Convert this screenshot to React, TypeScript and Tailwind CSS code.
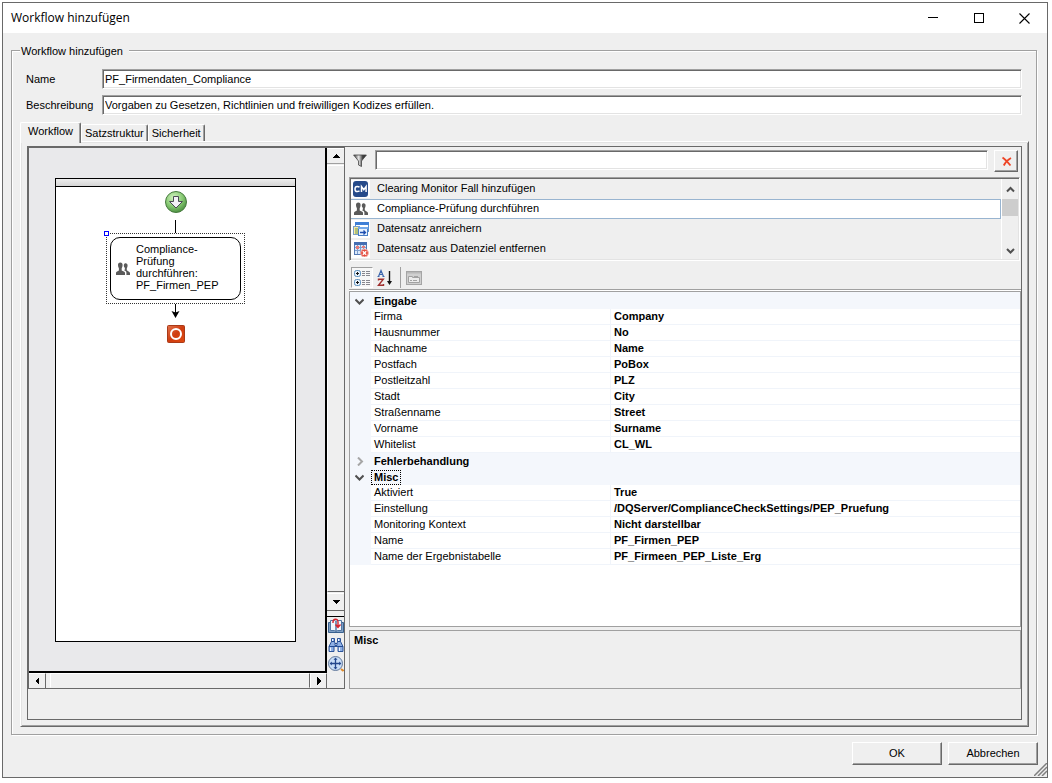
import React, { useState } from 'react';

const sunken = 'border border-t-[#a0a0a0] border-l-[#a0a0a0] border-r-white border-b-white shadow-[inset_1px_1px_0_#696969,inset_-1px_-1px_0_#e3e3e3]';
const raised = 'border border-t-white border-l-white border-r-[#696969] border-b-[#696969] shadow-[inset_-1px_-1px_0_#a0a0a0]';

const tabs = ['Workflow', 'Satzstruktur', 'Sicherheit'];

const groups = [
  {
    name: 'Eingabe',
    open: true,
    rows: [
      ['Firma', 'Company'],
      ['Hausnummer', 'No'],
      ['Nachname', 'Name'],
      ['Postfach', 'PoBox'],
      ['Postleitzahl', 'PLZ'],
      ['Stadt', 'City'],
      ['Straßenname', 'Street'],
      ['Vorname', 'Surname'],
      ['Whitelist', 'CL_WL'],
    ],
  },
  { name: 'Fehlerbehandlung', open: false, rows: [] },
  {
    name: 'Misc',
    open: true,
    rows: [
      ['Aktiviert', 'True'],
      ['Einstellung', '/DQServer/ComplianceCheckSettings/PEP_Pruefung'],
      ['Monitoring Kontext', 'Nicht darstellbar'],
      ['Name', 'PF_Firmen_PEP'],
      ['Name der Ergebnistabelle', 'PF_Firmeen_PEP_Liste_Erg'],
    ],
  },
];

/* Icons */

const PeopleIcon = () => (
  <svg width="16" height="16" viewBox="0 0 16 16" fill="#5a5a5a">
    <path d="M3 4C3 2.200 3.700 1.400 5.300 1.400S7.600 2.200 7.600 4c0 1.400-.3 2.400-.9 3.200v2.300l2.600 1.300c.5.300.7.700.7 1.300V14H1v-1.900c0-.6.2-1 .7-1.300l2.200-1.300V7.200C3.300 6.400 3 5.400 3 4z" />
    <path d="M8.800 4c.3-1.200.9-1.700 1.800-1.700 1.400 0 2 .9 2 2.300 0 1.200-.3 2-.8 2.700v2l2.500 1.600c.5.300.7.700.7 1.300V14h-3.600v-2.200c0-.8-.3-1.300-.9-1.700l-1.200-.7c.5-.8.7-1.500.6-2.500-.8-.7-1.200-1.700-1.100-2.900z" />
  </svg>
);

const CmIcon = () => (
  <svg width="16" height="16" viewBox="0 0 16 16">
    <rect x="0" y="0" width="15" height="16" rx="3" fill="#274b8a" />
    <path d="M6.500 6.200C5.800 5.500 4.900 5.400 4.100 5.400 2.800 5.400 2 6.500 2 8s.8 2.600 2.100 2.600c.8 0 1.700-.2 2.400-.9M8.500 11V5.500l2.300 3.200 2.300-3.200V11" fill="none" stroke="#fff" strokeWidth="1.500" />
  </svg>
);

const EnrichIcon = () => (
  <svg width="16" height="16" viewBox="0 0 16 16">
    <rect x="2.500" y="1.500" width="13" height="9" fill="#fff" stroke="#5b8fd0" />
    <path d="M2 1h14v3H2z" fill="#3f7fd6" />
    <rect x=".5" y="5.500" width="6" height="8" fill="#f7e7a0" stroke="#7aa0c8" />
    <path d="M2 8h3M2 10h3M2 12h3" stroke="#6b9b4e" />
    <rect x="5.500" y="6.500" width="9" height="8" fill="#e9f3ff" stroke="#4a7fc4" />
    <path d="M5 6h10v2H5z" fill="#74a9ea" />
    <path d="M7 11.500h5M10.500 9.500l2 2-2 2" fill="none" stroke="#1e4fb0" strokeWidth="1.300" />
  </svg>
);

const RemoveIcon = () => (
  <svg width="16" height="16" viewBox="0 0 16 16">
    <rect x="1.500" y="1.500" width="12" height="12" fill="#dce9fa" stroke="#5479b4" />
    <path d="M1 1h13v3H1z" fill="#466fb2" />
    <path d="M4.500 4v9M7.500 4v9M10.500 4v9M2 6.500h11M2 9.500h11" stroke="#7e9fce" />
    <path d="M3 5h3v3H3zM9 5h3v2H9z" fill="#e77a77" />
    <circle cx="11.500" cy="12" r="3.900" fill="#e3493b" stroke="#f5b5ad" />
    <path d="M9.800 10.300l3.400 3.400M13.200 10.300l-3.400 3.400" stroke="#fff" strokeWidth="1.400" />
  </svg>
);

const FilterIcon = () => (
  <svg width="14" height="14" viewBox="0 0 14 14">
    <defs>
      <linearGradient id="funnel" x1="0" x2="1">
        <stop offset="0" stopColor="#333" />
        <stop offset=".4" stopColor="#e8e8e8" />
        <stop offset=".7" stopColor="#444" />
        <stop offset="1" stopColor="#222" />
      </linearGradient>
    </defs>
    <path d="M.6 1h12.800L8.500 7v5.500l-3-1.500V7z" fill="url(#funnel)" stroke="#444" strokeWidth=".8" />
  </svg>
);

const CategorizedIcon = () => (
  <svg width="18" height="18" viewBox="0 0 18 18">
    {[1, 10].map(y => (
      <g key={y}>
        <rect x="1.500" y={y + 0.5} width="6" height="6" rx="2" fill="#e5f0fa" stroke="#5c8fbd" />
        <path d={`M3 ${y + 3.5}h3M4.500 ${y + 2}v3`} stroke="#111" />
        <path d={`M9 ${y + 1.5}h3M13 ${y + 1.5}h4M9 ${y + 3.5}h3M13 ${y + 3.5}h4M9 ${y + 5.5}h3M13 ${y + 5.5}h4`} stroke="#87878f" />
      </g>
    ))}
  </svg>
);

const SortIcon = () => (
  <svg width="18" height="18" viewBox="0 0 18 18">
    <path d="M1.500 7.500L4 1.500l2.500 6M2.500 5.500h3M.5 7.500h2M5.500 7.500h2" fill="none" stroke="#3b66ad" strokeWidth="1.200" />
    <path d="M1.500 11.500v-1.200h4.800L1.500 16.300h5V15" fill="none" stroke="#a0302f" strokeWidth="1.400" />
    <path d="M12.500 2v12" stroke="#111" strokeWidth="1.400" />
    <path d="M10 12h5l-2.500 4z" fill="#111" />
  </svg>
);

const PagesIcon = () => (
  <svg width="16" height="16" viewBox="0 0 16 16">
    <rect x=".5" y="1.500" width="15" height="13" fill="#d0d0d0" stroke="#a5a5a5" />
    <path d="M1 2h14v1.500H1z" fill="#b8b8b8" />
    <path d="M2.500 12.500v-6h4v1h7v5z" fill="#ececec" stroke="#a2a2a2" />
    <path d="M4 10.500h2M7 10.500h4M8 6.500h4" stroke="#a2a2a2" />
  </svg>
);

const RedXIcon = () => (
  <svg width="10" height="11" viewBox="0 0 10 11">
    <path d="M.5 1.500c3 2 5.500 5 8 8M9 2C6 3.500 3.500 6 1.800 9.500" fill="none" stroke="#ee4425" strokeWidth="1.800" />
  </svg>
);

const StartIcon = () => (
  <svg width="22" height="22" viewBox="0 0 22 22">
    <defs>
      <radialGradient id="start" cx=".4" cy=".3" r=".7">
        <stop offset="0" stopColor="#d5f5c4" />
        <stop offset=".6" stopColor="#86c872" />
        <stop offset="1" stopColor="#4f9343" />
      </radialGradient>
    </defs>
    <circle cx="11" cy="11" r="10.500" fill="url(#start)" stroke="#467a3e" />
    <path d="M8.500 5.500h5v5h4L11 17l-6.500-6.500h4z" fill="#f4f2f8" stroke="#4b4b55" />
  </svg>
);

const EndIcon = () => (
  <svg width="18" height="18" viewBox="0 0 18 18">
    <defs>
      <linearGradient id="end" x2="1" y2="1">
        <stop offset="0" stopColor="#e2744e" />
        <stop offset=".5" stopColor="#cf3d10" />
        <stop offset="1" stopColor="#e04a10" />
      </linearGradient>
    </defs>
    <rect x=".5" y=".5" width="17" height="17" rx="1" fill="url(#end)" stroke="#a93a18" />
    <circle cx="9" cy="9" r="5" fill="none" stroke="#fff" strokeWidth="2" />
  </svg>
);

const BookIcon = () => (
  <svg width="16" height="16" viewBox="0 0 16 16">
    <path d="M.5 4.500v10h15v-10z" fill="#7f9fc4" stroke="#38608f" />
    <path d="M2.500 2.500h4l1.500 1v10l-1.500-1h-4zM13.500 2.500h-4L8 3.500v10l1.500-1h4z" fill="#f3f7fc" stroke="#5377a3" />
    <path d="M5 5V4c0-3.500 5-4 5 0v4.500M7.500 6.500L10 9.500l2.500-3" fill="none" stroke="#d8242f" strokeWidth="1.400" />
  </svg>
);

const BinocularsIcon = () => (
  <svg width="16" height="16" viewBox="0 0 16 16">
    <path d="M3.500 1.500h3v3l.5 2v2H9v-2l.5-2v-3h3v3l2.500 5v5h-5v-5H6v5H1v-5l2.500-5z" fill="#8fb0e4" stroke="#2d559b" />
    <path d="M1 9.500h5M10 9.500h5M3.500 4.500h3M9.500 4.500h3M7 6.500h2" stroke="#234a91" />
    <path d="M2.500 10.500v3.500M11.500 10.500v3.500M4.500 2v2M10.500 2v2" stroke="#f1f7ff" />
  </svg>
);

const PanIcon = () => (
  <svg width="16" height="16" viewBox="0 0 16 16">
    <circle cx="7.500" cy="7.500" r="7" fill="#c9def8" stroke="#63799b" />
    <path d="M7.500 3v9M3 7.500h9" stroke="#24478c" strokeWidth="1.300" />
    <path d="M7.500 1.500l2 2.300h-4zM7.500 13.500l2-2.300h-4zM1.500 7.500l2.300-2v4zM13.500 7.500l-2.300-2v4z" fill="#24478c" />
    <path d="M13 13l2.500 2" stroke="#e08a2a" strokeWidth="2" />
  </svg>
);

const Chevron = ({ d, color = '#505050' }: { d: string; color?: string }) => (
  <svg width="9" height="9" viewBox="0 0 9 9" fill="none" stroke={color} strokeWidth="2">
    <path d={d} />
  </svg>
);

const Triangle = ({ points }: { points: string }) => (
  <svg width="8" height="8" viewBox="0 0 8 8" shapeRendering="crispEdges">
    <polygon points={points} />
  </svg>
);

const activities = [
  { label: 'Clearing Monitor Fall hinzufügen', icon: <CmIcon /> },
  { label: 'Compliance-Prüfung durchführen', icon: <PeopleIcon /> },
  { label: 'Datensatz anreichern', icon: <EnrichIcon /> },
  { label: 'Datensatz aus Datenziel entfernen', icon: <RemoveIcon /> },
];

const TitleBar = () => (
  <header className="flex h-[30px] items-center bg-white pl-2">
    <h1 className="flex-1 font-['Open_Sans',sans-serif] text-[12px] leading-4">Workflow hinzufügen</h1>
    <button aria-label="Minimieren" className="flex h-full w-[46px] items-center justify-center">
      <svg width="10" height="10" stroke="#000" shapeRendering="crispEdges"><path d="M0 4.500h10" /></svg>
    </button>
    <button aria-label="Maximieren" className="flex h-full w-[45px] items-center justify-center">
      <svg width="10" height="10" fill="none" stroke="#000" shapeRendering="crispEdges"><rect x=".5" y=".5" width="9" height="9" /></svg>
    </button>
    <button aria-label="Schließen" className="flex h-full w-[46px] items-center justify-center">
      <svg width="11" height="11" stroke="#000" strokeWidth="1.100"><path d="M.5 .5l10 10M10.500 .5l-10 10" /></svg>
    </button>
  </header>
);

const Designer = () => (
  <div className="flex w-[317px] shrink-0 border border-[#696969]">
    <div className="flex min-w-0 flex-1 flex-col">
      {/* Canvas */}
      <div className="flex flex-1 flex-col border-r-2 border-b-2 border-black bg-[#e9e9eb] pt-[30px] pr-[29px] pb-[29px] pl-[26px]">
        <div className="flex flex-1 flex-col items-center border border-black bg-white">
          <div className="h-2 w-full border-b border-black bg-linear-to-b from-[#eeeeee] to-[#d5d5d5]" />
          <div className="mt-1"><StartIcon /></div>
          <div className="mt-[7px] h-[13px] w-px bg-black" />
          <div className="relative border border-dotted border-[#333] p-[3px]">
            <span className="absolute -top-[3px] -left-[3px] h-[5px] w-[5px] border border-[#0000ff] bg-white" />
            <div className="flex h-[63px] w-[131px] items-center gap-[5px] rounded-[10px] border border-black pl-1">
              <div className="shrink-0"><PeopleIcon /></div>
              <p className="pb-1 text-[11px] leading-[12px]">Compliance-<br />Prüfung<br />durchführen:<br />PF_Firmen_PEP</p>
            </div>
          </div>
          <svg width="9" height="14" viewBox="0 0 9 14"><path d="M4.500 0v10" stroke="#000" /><path d="M.5 7l4 1.500 4-1.500-4 7z" /></svg>
          <div className="mt-[7px]"><EndIcon /></div>
        </div>
      </div>
      {/* Horizontal scrollbar */}
      <div className="flex h-[15px]">
        <button aria-label="Nach links" className="flex w-[17px] items-center justify-center border-t border-r border-t-white border-r-[#696969]"><Triangle points="6,0 6,8 2,4" /></button>
        <div className="ml-1 flex-1 border border-t-white border-r-[#696969] border-b-transparent border-l-white" />
        <button aria-label="Nach rechts" className="flex w-[17px] items-center justify-center border-t border-r border-l border-t-white border-r-[#696969] border-l-white"><Triangle points="2,0 2,8 6,4" /></button>
      </div>
    </div>
    {/* Vertical scrollbar and view tools */}
    <div className="flex w-[17px] flex-col">
      <button aria-label="Nach oben" className="flex h-4 items-center justify-center border-t border-b border-t-white border-b-[#a0a0a0]"><Triangle points="4,2 8,6 0,6" /></button>
      <div className="mt-px flex-1 border-t border-b border-l border-t-white border-b-[#696969] border-l-white" />
      <button aria-label="Nach unten" className="mt-px flex h-[18px] items-center justify-center border-t border-b border-t-white border-b-[#696969]"><Triangle points="0,2 8,2 4,6" /></button>
      <div className="mt-[5px] flex flex-col items-end gap-[3px] border-t border-black pt-px pb-[16px]">
        <button aria-label="Seite"><BookIcon /></button>
        <button aria-label="Suchen"><BinocularsIcon /></button>
        <button aria-label="Verschieben"><PanIcon /></button>
      </div>
    </div>
  </div>
);

const ActivityList = () => {
  const [selected, setSelected] = useState(1);
  return (
    <div className={`mr-px flex p-px ${sunken}`}>
      <ul role="listbox" aria-label="Aktivitäten" className="min-w-0 flex-1">
        {activities.map((a, i) => (
          <li
            key={a.label}
            role="option"
            aria-selected={i === selected}
            onClick={() => setSelected(i)}
            className={`flex h-5 items-center border-y border-r ${i === selected ? 'border-[#98b4d0] bg-white' : 'border-transparent'}`}
          >
            <span className="flex h-full w-[19px] shrink-0 items-center justify-center bg-white">{a.icon}</span>
            <span className="pb-[2px] pl-[7px] leading-[13px]">{a.label}</span>
          </li>
        ))}
      </ul>
      <div className="flex w-[17px] flex-col items-center border-l border-white">
        <button aria-label="Hoch" className="flex h-5 w-full items-center justify-center"><Chevron d="M1 6.500L4.500 3 8 6.500" /></button>
        <div className="h-[17px] w-full bg-[#cdcdcd]" />
        <div className="flex-1" />
        <button aria-label="Runter" className="flex h-[17px] w-full items-center justify-center"><Chevron d="M1 3l3.500 3.500L8 3" /></button>
      </div>
    </div>
  );
};

const PropertyGrid = () => (
  <div className="min-h-[336px] flex-1 border border-[#a0a0a0] bg-white">
    <table className="w-full table-fixed border-separate border-spacing-0 border-t border-[#f4f7fc]">
      <colgroup>
        <col className="w-[21px]" />
        <col className="w-[240px]" />
        <col />
      </colgroup>
      {groups.map(g => (
        <tbody key={g.name}>
          <tr className="h-4 bg-[#f4f7fc]">
            <td className="p-0 pl-[5px]">
              <button aria-label={g.name} className="block">
                {g.open ? <Chevron d="M.5 2.500l4 4 4-4" /> : <Chevron d="M3 .5l4 4-4 4" color="#a6a6a6" />}
              </button>
            </td>
            <th colSpan={2} className="p-0 text-left leading-[13px] font-bold">
              <span className={`block w-fit border border-dotted px-[2px] leading-[13px] ${g.name === 'Misc' ? 'border-black' : 'border-transparent'}`}>{g.name}</span>
            </th>
          </tr>
          {g.rows.map(([key, value]) => (
            <tr key={key} className="h-4">
              <td className="bg-[#f4f7fc] p-0" />
              <td className="border-r border-b border-[#f0f4fa] p-0 pl-[3px] leading-[15px]">{key}</td>
              <td className="border-b border-[#f0f4fa] p-0 pl-[3px] leading-[15px] font-bold">{value}</td>
            </tr>
          ))}
        </tbody>
      ))}
    </table>
  </div>
);

const SidePanel = () => (
  <div className="flex min-w-0 flex-1 flex-col">
    <div className="flex pt-[3px] pr-[3px] pb-[5px] pl-1">
      <label htmlFor="filter" aria-label="Filter" className="mt-1 w-[22px]"><FilterIcon /></label>
      <input id="filter" className={`h-5 min-w-0 flex-1 bg-white px-[3px] outline-none ${sunken}`} />
      <button aria-label="Filter löschen" className={`ml-[6px] flex h-[22px] w-6 items-end justify-center pb-1 pl-[2px] ${raised}`}><RedXIcon /></button>
    </div>
    <ActivityList />
    {/* Toolbar */}
    <div className="mt-[6px] flex h-[23px] border-b border-[#a0a0a0] pl-[2px]">
      <button aria-label="Kategorisiert" className="flex h-[21px] w-[22px] items-center justify-center border border-t-[#a0a0a0] border-r-white border-b-white border-l-[#a0a0a0] bg-[#f7f7f7]"><CategorizedIcon /></button>
      <button aria-label="Alphabetisch" className="ml-[2px] flex h-[21px] w-[22px] items-center justify-center"><SortIcon /></button>
      <div className="ml-[3px] h-[21px] w-px bg-[#a0a0a0]" />
      <button aria-label="Eigenschaftenseiten" disabled className="ml-[2px] flex h-[21px] w-[22px] items-center justify-center"><PagesIcon /></button>
    </div>
    <div className="h-px bg-white" />
    <PropertyGrid />
    <div className="mt-[3px] h-[59px] border border-[#a0a0a0] pt-[3px] pl-1 leading-[13px] font-bold">Misc</div>
  </div>
);

export default function App() {
  const [name, setName] = useState('PF_Firmendaten_Compliance');
  const [description, setDescription] = useState('Vorgaben zu Gesetzen, Richtlinien und freiwilligen Kodizes erfüllen.');
  const [tab, setTab] = useState(0);

  return (
    <div className="flex min-h-screen flex-col bg-white pt-[2px] pr-1 pb-[5px] pl-[2px] font-['Liberation_Sans',Arial,sans-serif] text-[11px] leading-[13px] text-black">
      <div className="flex flex-1 flex-col border border-[#696969] bg-[#efefef]">
        <TitleBar />

        <fieldset className="mt-[10px] mr-[10px] ml-2 min-w-0 border border-[#a0a0a0] pt-[11px] pb-[7px] shadow-[1px_1px_0_#fff,inset_1px_1px_0_#fff]">
          <legend className="ml-2 bg-[#efefef] pt-[2px] pr-[6px] pl-px leading-[13px]">Workflow hinzufügen</legend>

          <div className="grid grid-cols-[76px_1fr] items-center gap-y-[6px] pr-[14px] pl-[14px]">
            <label htmlFor="name">Name</label>
            <input id="name" value={name} onChange={e => setName(e.target.value)} className={`h-5 w-full bg-white px-[2px] outline-none ${sunken}`} />
            <label htmlFor="description">Beschreibung</label>
            <input id="description" value={description} onChange={e => setDescription(e.target.value)} className={`h-5 w-full bg-white px-[2px] outline-none ${sunken}`} />
          </div>

          <div role="tablist" className="mt-[7px] flex items-end pl-2">
            {tabs.map((t, i) => (
              <button
                key={t}
                role="tab"
                aria-selected={i === tab}
                onClick={() => setTab(i)}
                className={`rounded-t-[2px] border-t border-r border-l border-t-white border-r-[#696969] border-l-white shadow-[inset_-1px_0_0_#a0a0a0] ${i === tab ? 'z-10 -mb-[2px] h-[21px] bg-[#efefef] pr-[7px] pb-[3px] pl-[7px]' : 'h-[17px] pr-[3px] pl-[3px]'}`}
              >
                {t}
              </button>
            ))}
          </div>

          <div role="tabpanel" className="mr-[7px] ml-2 border border-t-white border-r-[#696969] border-b-[#696969] border-l-white pt-1 pr-[6px] pb-[6px] pl-[6px] shadow-[inset_1px_1px_0_#e3e3e3,inset_-1px_-1px_0_#a0a0a0]">
            <div className="flex border border-[#696969] pb-[30px]">
              <Designer />
              <div className="w-1" />
              <SidePanel />
            </div>
          </div>
        </fieldset>

        {/* Dialog buttons */}
        <footer className="relative mt-auto flex justify-end gap-[6px] pt-[7px] pr-[9px] pb-3">
          <button className={`h-[23px] w-[90px] ${raised}`}>OK</button>
          <button className={`h-[23px] w-[90px] ${raised}`}>Abbrechen</button>
          <svg width="13" height="13" viewBox="0 0 13 13" className="absolute right-0 bottom-px" stroke="#808080" strokeWidth="1.500">
            <path d="M0 13L13 0M4 13l9-9M8 13l5-5" />
          </svg>
        </footer>
      </div>
    </div>
  );
}
